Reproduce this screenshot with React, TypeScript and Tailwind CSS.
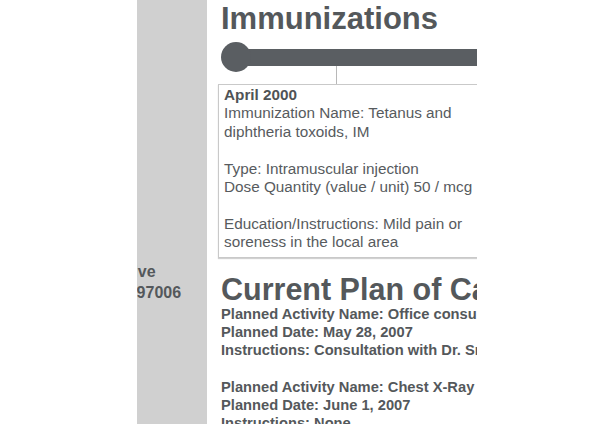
import React from "react";

const boxLines: Array<{ text: string; bold?: boolean }> = [
  { text: "April 2000", bold: true },
  { text: "Immunization Name: Tetanus and diphtheria toxoids, IM" },
  { text: "" },
  { text: "Type: Intramuscular injection" },
  { text: "Dose Quantity (value / unit) 50 / mcg" },
  { text: "" },
  { text: "Education/Instructions: Mild pain or soreness in the local area" },
];

const planLines = [
  "Planned Activity Name: Office consultation",
  "Planned Date: May 28, 2007",
  "Instructions: Consultation with Dr. Smith",
  "",
  "Planned Activity Name: Chest X-Ray",
  "Planned Date: June 1, 2007",
  "Instructions: None",
];

export default function App() {
  return (
    <div className="flex w-[615px] h-[424px] overflow-hidden bg-white font-['Liberation_Sans',Arial,sans-serif] text-[#54585b]">
      {/* Left blank */}
      <div className="w-[137px] shrink-0 bg-white" />

      {/* Sidebar (clipped) */}
      <div className="w-[70px] shrink-0 bg-[#d0d0d0] overflow-hidden pt-[261px]">
        <div className="-ml-[116px] whitespace-nowrap text-[16px] leading-[21px] font-bold">
          <div>1357 Amber Drive</div>
          <div>Beaverton, OR 97006</div>
        </div>
      </div>

      {/* Main content (clipped) */}
      <div className="w-[270px] shrink-0 overflow-hidden pl-[11px] pt-[3px]">
        <h1 className="ml-[3px] text-[31px] leading-[31px] font-bold whitespace-nowrap">
          Immunizations
        </h1>

        {/* Timeline */}
        <svg width="259" height="42" viewBox="0 0 259 42" className="mt-[8px] block">
          <rect x="18" y="7" width="260" height="17" fill="#5a5e62" />
          <circle cx="18" cy="15" r="15" fill="#5a5e62" />
          <line x1="118.5" y1="24" x2="118.5" y2="42" stroke="#b8b8b8" strokeWidth="1" />
        </svg>

        {/* Event box */}
        <div className="w-[282px] border border-[#c9c9c9] shadow-[0_1px_1px_rgba(0,0,0,0.18)] pt-[1px] pb-[5px] px-[5px] text-[15.3px] leading-[18.4px] text-[#575b5e]">
          {boxLines.map((line, idx) =>
            line.text ? (
              <div key={idx} className={line.bold ? "font-bold text-[#4f5356]" : ""}>
                {line.text}
              </div>
            ) : (
              <div key={idx} className="h-[18.4px]" />
            ),
          )}
        </div>

        <h2 className="mt-[16px] ml-[3px] text-[30.5px] leading-[31px] font-bold whitespace-nowrap">
          Current Plan of Care
        </h2>
        <div className="ml-[3px] text-[14.7px] leading-[18.3px] font-bold whitespace-nowrap">
          {planLines.map((line, idx) =>
            line ? <div key={idx}>{line}</div> : <div key={idx} className="h-[18.3px]" />,
          )}
        </div>
      </div>

      <div className="flex-1 bg-white" />
    </div>
  );
}
